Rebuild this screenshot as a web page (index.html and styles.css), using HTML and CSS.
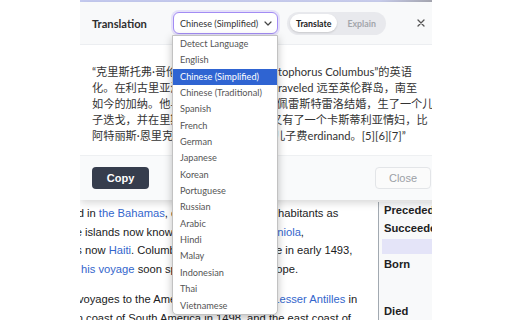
FILE: index.html
```html
<!DOCTYPE html>
<html lang="zh">
<head>
<meta charset="utf-8">
<title>Translation</title>
<link rel="stylesheet" href="styles.css">
</head>
<body>
<div class="viewport">
  <div class="topline"></div>
  <div class="article">
    <div class="content">
      <p class="para">
        <span class="ln l1">d in <a>the Bahamas</a>, on an isle its native inhabitants as</span>
        <span class="ln l2">e islands now known as <a>Cuba</a> and <a>Hispaniola</a>,</span>
        <span class="ln l3">s now <a>Haiti</a>. Columbus returned to Castile in early 1493,</span>
        <span class="ln l4">f <a>his voyage</a> soon spread throughout Europe.</span>
      </p>
      <p class="para">
        <span class="ln l5">voyages to the Americas, exploring the <a>Lesser Antilles</a> in</span>
        <span class="ln l6">n coast of South America in 1498, and the east coast of</span>
      </p>
    </div>
    <aside class="infobox">
      <div class="ib-row">Preceded by</div>
      <div class="ib-row">Succeeded by</div>
      <div class="ib-bar"></div>
      <div class="ib-row ib-born">Born</div>
      <div class="ib-row ib-died">Died</div>
    </aside>
  </div>

  <div class="dialog">
    <div class="dlg-head">
      <div class="title">Translation</div>
      <div class="select">
        <span>Chinese (Simplified)</span>
        <svg class="chev" width="8" height="5" viewBox="0 0 8 5"><path d="M1 1l3 3 3-3" fill="none" stroke="#444" stroke-width="1.2" stroke-linecap="round" stroke-linejoin="round"/></svg>
      </div>
      <div class="toggle">
        <span class="seg seg-on">Translate</span>
        <span class="seg seg-off">Explain</span>
      </div>
      <svg class="xbtn" width="8" height="8" viewBox="0 0 8 8"><path d="M1 1l6 6M7 1l-6 6" stroke="#555" stroke-width="1.3" stroke-linecap="round"/></svg>
    </div>
    <div class="dlg-body">“克里斯托弗·哥伦布”是拉丁语名“Christophorus Columbus”的英语<br>化。在利古里亚海岸长大，他航海， traveled 远至英伦群岛，南至<br>如今的加纳。他与贵族菲利帕·莫尼兹·佩雷斯特雷洛结婚，生了一个儿<br>子迭戈，并在里斯本居住了几年后他又有了一个卡斯蒂利亚情妇，比<br>阿特丽斯·恩里克斯，她为他生了一个儿子费erdinand。[5][6][7]”</div>
    <div class="dlg-foot">
      <button class="btn copy">Copy</button>
      <button class="btn close-btn">Close</button>
    </div>
  </div>

  <ul class="menu">
    <li>Detect Language</li>
    <li>English</li>
    <li class="sel">Chinese (Simplified)</li>
    <li>Chinese (Traditional)</li>
    <li>Spanish</li>
    <li>French</li>
    <li>German</li>
    <li>Japanese</li>
    <li>Korean</li>
    <li>Portuguese</li>
    <li>Russian</li>
    <li>Arabic</li>
    <li>Hindi</li>
    <li>Malay</li>
    <li>Indonesian</li>
    <li>Thai</li>
    <li>Vietnamese</li>
  </ul>
</div>
</body>
</html>
```

FILE: styles.css
```css
html, body {
  margin: 0;
  padding: 0;
  background: #fff;
}
body {
  width: 512px;
  height: 320px;
  overflow: hidden;
}
.viewport {
  margin-left: 80px;
  width: 352px;
  height: 320px;
  position: relative;
  overflow: hidden;
  background: #fff;
}
.topline {
  height: 2px;
  background: linear-gradient(90deg, #c6ccf2 0%, #cbd0f0 85%, #a8a9b3 100%);
}
.article {
  display: flex;
  padding-top: 200px;
  height: 118px;
}
.content {
  width: 298px;
  overflow: hidden;
  padding-top: 2px;
  font-family: "Liberation Sans", Arial, sans-serif;
  font-size: 11.2px;
  line-height: 18.7px;
  color: #202122;
}
.content a {
  color: #3366cc;
}
.para {
  margin: 0 0 11px;
}
.ln {
  display: block;
  white-space: nowrap;
}
.l1 { margin-left: -2.3px; }
.l2 { margin-left: -4.3px; }
.l3 { margin-left: -3.7px; }
.l4 { margin-left: -5.2px; }
.l5 { margin-left: -2.1px; }
.l6 { margin-left: -3.3px; }

.infobox {
  flex: 1;
  background: #f8f9fa;
  border-left: 1px solid #a2a9b1;
  padding-left: 5px;
  font-family: "Liberation Sans", Arial, sans-serif;
  font-weight: bold;
  font-size: 11.2px;
  color: #202122;
  white-space: nowrap;
  overflow: hidden;
}
.ib-row {
  height: 18px;
  line-height: 16px;
}
.ib-bar {
  height: 15px;
  margin: 1px 0 0 -2px;
  background: #e4e4f8;
}
.ib-born { margin-top: 2px; }
.ib-died { margin-top: 29px; }

/* dialog */
.dialog {
  position: absolute;
  top: 2px;
  left: 0;
  width: 364px;
  height: 198px;
  background: #fff;
  box-shadow: 0 3px 8px rgba(0, 0, 0, 0.16);
  display: flex;
  flex-direction: column;
  font-family: Lato, "Noto Sans CJK SC", sans-serif;
}
.dlg-head {
  height: 43px;
  box-sizing: border-box;
  border-bottom: 1px solid #eceef1;
  background: #f8f9fa;
  display: flex;
  align-items: center;
  padding-left: 12px;
}
.title {
  width: 81px;
  font-size: 11.2px;
  font-weight: 700;
  color: #2e2e2e;
}
.select {
  width: 105px;
  height: 22px;
  box-sizing: border-box;
  border: 1px solid #a38cf4;
  border-radius: 6px;
  box-shadow: 0 0 0 2px rgba(163, 140, 244, 0.22);
  background: #fff;
  display: flex;
  align-items: center;
  justify-content: space-between;
  padding: 0 5px 0 6px;
  font-size: 9.1px;
  color: #333;
}
.chev {
  display: block;
}
.toggle {
  margin-left: 9px;
  width: 99px;
  height: 23px;
  box-sizing: border-box;
  border-radius: 12px;
  background: #e8e9ed;
  display: flex;
  align-items: center;
  padding: 0 3px;
  gap: 10px;
}
.seg {
  font-size: 8.8px;
  font-weight: 700;
}
.seg-on {
  height: 18px;
  padding: 0 6px;
  border-radius: 9px;
  background: #fff;
  color: #222;
  box-shadow: 0 1px 2px rgba(0, 0, 0, 0.14);
  display: flex;
  align-items: center;
}
.seg-off {
  color: #a3a6ab;
}
.xbtn {
  display: block;
  margin-left: 31px;
}
.dlg-body {
  flex: 1;
  padding: 18.5px 12px 0;
  font-size: 11.2px;
  line-height: 16px;
  color: #333;
  white-space: nowrap;
}
.dlg-foot {
  height: 45px;
  box-sizing: border-box;
  border-top: 1px solid #eef0f2;
  background: #f9fafb;
  display: flex;
  align-items: center;
  justify-content: space-between;
  padding: 0 13px 0 12px;
}
.btn {
  margin: 0;
  padding: 0;
  height: 22px;
  border-radius: 4px;
  font-family: "Liberation Sans", Arial, sans-serif;
  font-size: 11px;
}
.copy {
  width: 57px;
  border: 0;
  background: #363d4d;
  color: #fff;
  font-weight: bold;
}
.close-btn {
  width: 56px;
  border: 1px solid #e3e5e8;
  background: #fbfbfb;
  color: #9ca0a6;
}

/* dropdown */
.menu {
  position: absolute;
  left: 92px;
  top: 35px;
  width: 106px;
  box-sizing: border-box;
  margin: 0;
  padding: 0;
  list-style: none;
  background: #fff;
  border: 1px solid #c2c2c2;
  border-radius: 0 0 5px 5px;
  box-shadow: 0 3px 8px rgba(0, 0, 0, 0.25);
  font-family: Lato, sans-serif;
  font-size: 9.2px;
  color: #555;
}
.menu li {
  height: 16.35px;
  line-height: 16.35px;
  padding-left: 7px;
  white-space: nowrap;
}
.menu li.sel {
  background: #2f64d2;
  color: #fff;
}
```
